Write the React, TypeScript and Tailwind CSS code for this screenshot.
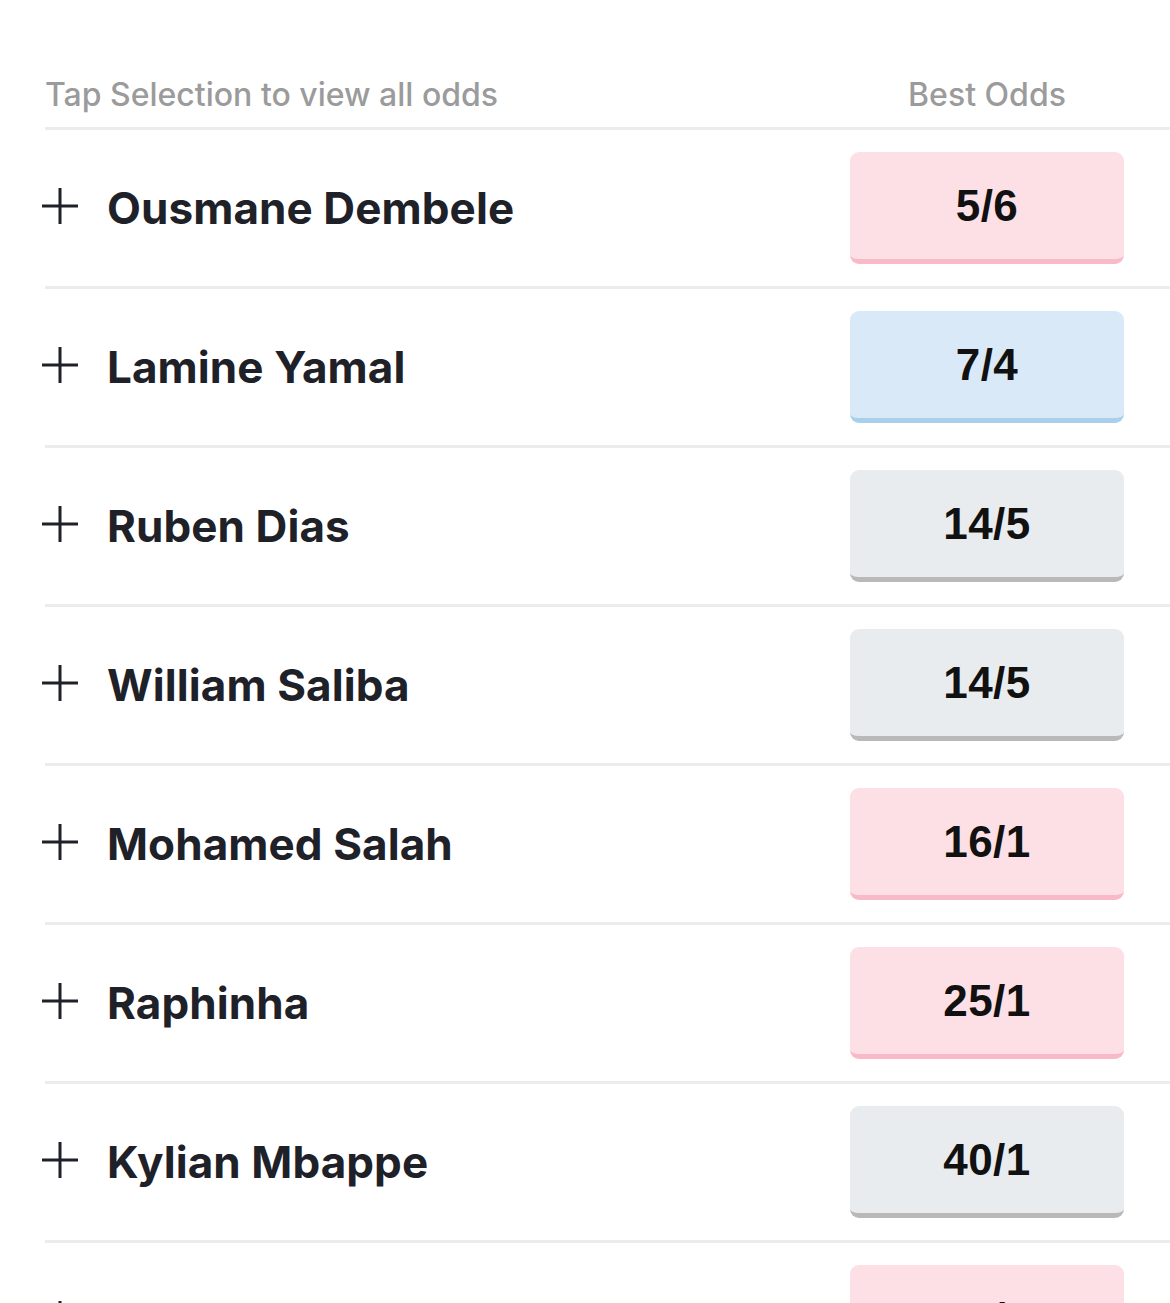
import React from 'react';

type Tone = 'pink' | 'blue' | 'grey';

interface Selection {
  name: string;
  odds: string;
  tone: Tone;
}

const selections: Selection[] = [
  { name: 'Ousmane Dembele', odds: '5/6', tone: 'pink' },
  { name: 'Lamine Yamal', odds: '7/4', tone: 'blue' },
  { name: 'Ruben Dias', odds: '14/5', tone: 'grey' },
  { name: 'William Saliba', odds: '14/5', tone: 'grey' },
  { name: 'Mohamed Salah', odds: '16/1', tone: 'pink' },
  { name: 'Raphinha', odds: '25/1', tone: 'pink' },
  { name: 'Kylian Mbappe', odds: '40/1', tone: 'grey' },
  { name: 'Vitinha', odds: '70/1', tone: 'pink' },
];

const toneClasses: Record<Tone, string> = {
  pink: 'bg-[#fde0e5] border-[#f9b9c6]',
  blue: 'bg-[#d9e9f8] border-[#a8d0ec]',
  grey: 'bg-[#e9ecef] border-[#b9b9b9]',
};

function PlusIcon() {
  return (
    <svg width="38" height="38" viewBox="0 0 38 38" className="flex-shrink-0 -ml-[4px] -mt-[5px]">
      <path d="M19 1v36M1 19h36" stroke="#1f2129" strokeWidth="3" />
    </svg>
  );
}

function SelectionRow({ name, odds, tone }: Selection) {
  return (
    <div className="flex items-center h-[156px] border-b-[3px] border-[#ececec] box-content">
      <PlusIcon />
      <span className="ml-[28px] flex-1 text-[44px] font-bold text-[#1f2129] leading-none tracking-[0.002em]">
        {name}
      </span>
      <button
        className={`mr-[46px] w-[274px] h-[112px] rounded-[9px] border-b-[5px] flex items-center justify-center ${toneClasses[tone]}`}
      >
        <span className="text-[44px] font-bold text-[#111] leading-none tracking-[0.01em] font-['Liberation_Sans',Arial,sans-serif]">
          {odds}
        </span>
      </button>
    </div>
  );
}

export default function App() {
  return (
    <div className="h-[1303px] overflow-hidden bg-white font-['Inter',sans-serif]">
      <div className="pl-[45px]">
        {/* Header */}
        <div className="flex items-start h-[130px] pt-[76px] border-b-[3px] border-[#ececec]">
          <span className="flex-1 text-[32px] font-medium text-[#9b9b9b] leading-[38px]">
            Tap Selection to view all odds
          </span>
          <span className="mr-[46px] w-[274px] text-center text-[32px] font-medium text-[#9b9b9b] leading-[38px]">
            Best Odds
          </span>
        </div>

        {selections.map((s) => (
          <SelectionRow key={s.name} {...s} />
        ))}
      </div>
    </div>
  );
}
